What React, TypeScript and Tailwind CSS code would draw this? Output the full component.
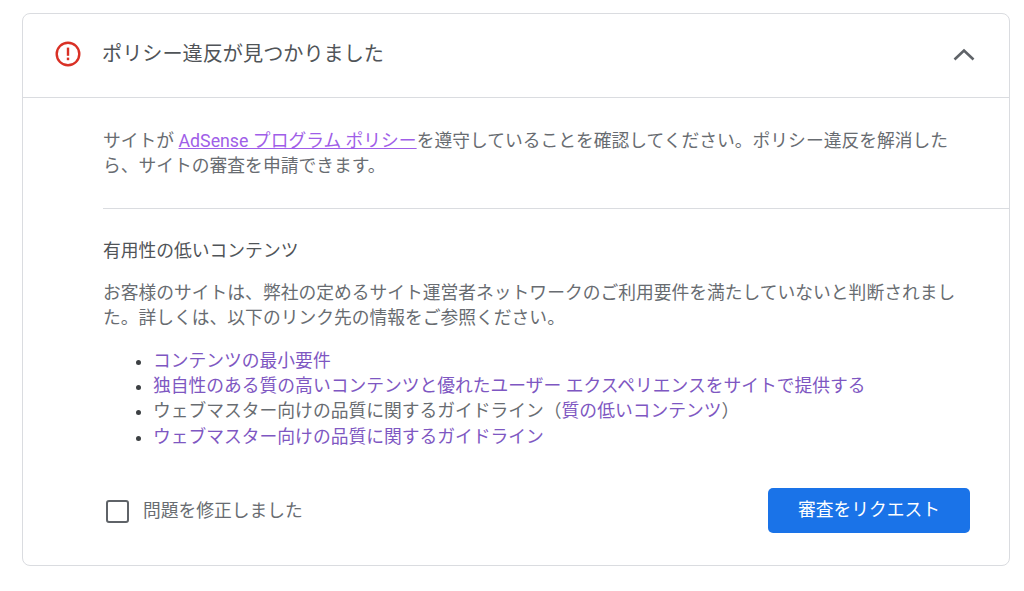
export default function App() {
  const link = "text-[#7e57c2]";
  return (
    <div className="min-h-[591px] bg-white pl-[22px] pt-[13px] text-[17.78px] leading-[25.33px] text-[#686c71] [font-family:Roboto,'Noto_Sans_CJK_JP',sans-serif]">
      <div className="w-[988px] h-[553px] bg-white border border-[#dadce0] rounded-[8px]">
        <div className="flex items-center h-[84px] border-b border-[#dadce0] pl-[32px] pr-[33px]">
          <svg className="-mt-[3px]" width="26" height="26" viewBox="0 0 26 26" fill="none">
            <circle cx="13" cy="13" r="11.3" stroke="#d93025" strokeWidth="2.4" />
            <rect x="11.8" y="6.6" width="2.4" height="8.2" fill="#d93025" />
            <rect x="11.8" y="16.6" width="2.4" height="2.6" fill="#d93025" />
          </svg>
          <h1 className="ml-[21px] text-[20.15px] leading-[26px] font-normal text-[#505458] -mt-[3px]">ポリシー違反が見つかりました</h1>
          <svg className="ml-auto -mt-[2px]" width="24" height="24" viewBox="0 0 24 24" fill="none">
            <path d="M2.5 16.5 L12 7.5 L21.5 16.5" stroke="#5f6368" strokeWidth="2.6" />
          </svg>
        </div>
        <div className="pl-[80px] pt-[31px]">
          <p className="pr-[55px]">
            サイトが <a className="text-[#a05ee8] underline">AdSense プログラム ポリシー</a>を遵守していることを確認してください。ポリシー違反を解消したら、サイトの審査を申請できます。
          </p>
          <div className="mt-[28px] border-t border-[#dadce0]" />
          <h2 className="mt-[30px] font-normal text-[#505458]">有用性の低いコンテンツ</h2>
          <p className="mt-[17px] pr-[50px]">
            お客様のサイトは、弊社の定めるサイト運営者ネットワークのご利用要件を満たしていないと判断されました。詳しくは、以下のリンク先の情報をご参照ください。
          </p>
          <ul className="mt-[17px] pl-[50px] list-disc marker:text-[#3c4043]">
            <li className={link}>コンテンツの最小要件</li>
            <li className={link}>独自性のある質の高いコンテンツと優れたユーザー エクスペリエンスをサイトで提供する</li>
            <li>ウェブマスター向けの品質に関するガイドライン（<span className={link}>質の低いコンテンツ</span>）</li>
            <li className={link}>ウェブマスター向けの品質に関するガイドライン</li>
          </ul>
          <div className="mt-[38px] mr-[39px] flex items-center justify-between">
            <label className="flex items-center ml-[3px] pt-[2px]">
              <span className="w-[23px] h-[23px] border-[2.5px] border-[#5f6368] rounded-[3px]" />
              <span className="ml-[14px]">問題を修正しました</span>
            </label>
            <button className="w-[202px] h-[45px] bg-[#1a73e8] text-white rounded-[5px]">審査をリクエスト</button>
          </div>
        </div>
      </div>
    </div>
  );
}
